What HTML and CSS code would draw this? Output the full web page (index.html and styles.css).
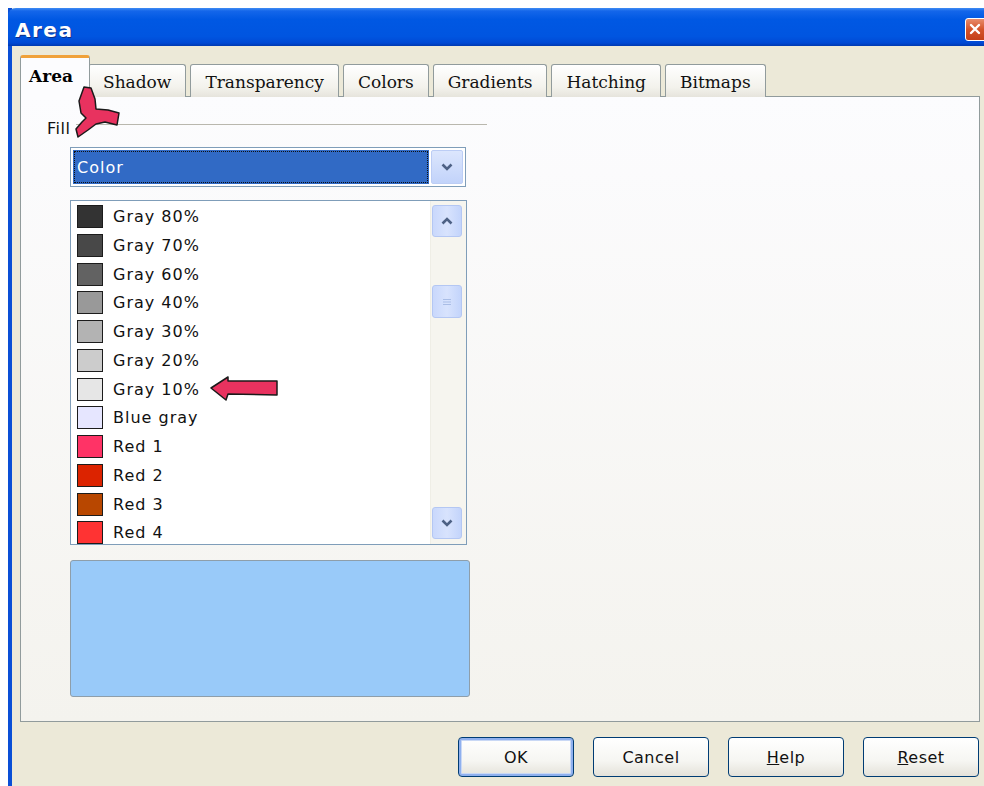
FILE: index.html
```html
<!DOCTYPE html>
<html lang="en">
<head>
<meta charset="utf-8">
<title>Area</title>
<link rel="stylesheet" href="styles.css">
</head>
<body>
<div class="window">
  <header class="titlebar">
    <span class="title">Area</span>
    <span class="close-btn">
      <svg width="12" height="12" viewBox="0 0 12 12"><path d="M2 2 L10 10 M10 2 L2 10" stroke="#fff" stroke-width="2.4" stroke-linecap="round"/></svg>
    </span>
  </header>

  <div class="client">
    <nav class="tabs">
      <span class="tab active">Area</span>
      <span class="tab">Shadow</span>
      <span class="tab">Transparency</span>
      <span class="tab">Colors</span>
      <span class="tab">Gradients</span>
      <span class="tab">Hatching</span>
      <span class="tab">Bitmaps</span>
    </nav>

    <section class="panel">
      <div class="fill-row">
        <span class="fill-label">Fill</span>
        <span class="rule"></span>
      </div>

      <div class="fill-body">
        <div class="select">
          <span class="select-value"><span class="focus">Color</span></span>
          <span class="select-btn">
            <svg width="14" height="10" viewBox="0 0 14 10"><path d="M2.5 2.5 L7 7 L11.5 2.5" fill="none" stroke="#4d6185" stroke-width="2.6"/></svg>
          </span>
        </div>

        <div class="listbox">
          <ul class="items">
            <li class="item"><span class="swatch" style="background:#333333"></span>Gray 80%</li>
            <li class="item"><span class="swatch" style="background:#484848"></span>Gray 70%</li>
            <li class="item"><span class="swatch" style="background:#626262"></span>Gray 60%</li>
            <li class="item"><span class="swatch" style="background:#999999"></span>Gray 40%</li>
            <li class="item"><span class="swatch" style="background:#b3b3b3"></span>Gray 30%</li>
            <li class="item"><span class="swatch" style="background:#cccccc"></span>Gray 20%</li>
            <li class="item"><span class="swatch" style="background:#e6e6e6"></span>Gray 10%</li>
            <li class="item"><span class="swatch" style="background:#e6e6ff"></span>Blue gray</li>
            <li class="item"><span class="swatch" style="background:#ff3366"></span>Red 1</li>
            <li class="item"><span class="swatch" style="background:#dc2300"></span>Red 2</li>
            <li class="item"><span class="swatch" style="background:#b84700"></span>Red 3</li>
            <li class="item"><span class="swatch" style="background:#ff3333"></span>Red 4</li>
          </ul>
          <div class="scrollbar">
            <span class="sb-btn">
              <svg width="14" height="10" viewBox="0 0 14 10"><path d="M2.5 7.5 L7 3 L11.5 7.5" fill="none" stroke="#4d6185" stroke-width="2.6"/></svg>
            </span>
            <span class="sb-track">
              <span class="sb-thumb">
                <svg width="10" height="10" viewBox="0 0 10 10"><path d="M1 2.5 H9 M1 5 H9 M1 7.5 H9" stroke="#a9bde6" stroke-width="1"/></svg>
              </span>
            </span>
            <span class="sb-btn">
              <svg width="14" height="10" viewBox="0 0 14 10"><path d="M2.5 2.5 L7 7 L11.5 2.5" fill="none" stroke="#4d6185" stroke-width="2.6"/></svg>
            </span>
          </div>
        </div>

        <div class="preview"></div>
      </div>
    </section>

    <footer class="buttons">
      <button class="btn default">OK</button>
      <button class="btn">Cancel</button>
      <button class="btn"><u>H</u>elp</button>
      <button class="btn"><u>R</u>eset</button>
    </footer>
  </div>

  <!-- pointer callouts drawn over the dialog -->
  <svg class="callout callout-tab" width="60" height="60" viewBox="0 0 60 60">
    <path d="M9 2 L16 3 L20 14 L21 24 L33 25 L44 28 L42 40 L30 37 L21 39 L13 45 L3 52 L1 44 L7 37 L11 33 L6 28 L4 16 Z" fill="#e8325f" stroke="#1a1a1a" stroke-width="1.5" stroke-linejoin="round"/>
  </svg>
  <svg class="callout callout-item" width="72" height="30" viewBox="0 0 72 30">
    <path d="M2 14 L19 3 L19 7 L68 7 L68 21 L19 20 L17 26 Z" fill="#e8325f" stroke="#1a1a1a" stroke-width="1.5" stroke-linejoin="round"/>
  </svg>
</div>
</body>
</html>
```

FILE: styles.css
```css
html, body {
  height: 100%;
}

body {
  margin: 8px 0 0 8px;
  background: #ffffff;
  overflow: hidden;
  font-family: "DejaVu Sans", "Liberation Sans", sans-serif;
}

.window {
  position: relative;
  height: 100%;
  border-left: 4px solid #0a4fd6;
  background: #ece9d8;
  display: flex;
  flex-direction: column;
}

/* Title bar */
.titlebar {
  height: 38px;
  margin-left: -4px;
  border-top-left-radius: 8px;
  background: linear-gradient(to bottom, #3f8cf3 0%, #1466ea 8%, #0058e3 30%, #0055e0 75%, #0049d4 92%, #0039b0 100%);
  display: flex;
  align-items: center;
  justify-content: space-between;
  flex-shrink: 0;
}

.title {
  margin-left: 7px;
  margin-top: 6px;
  color: #ffffff;
  font-weight: bold;
  font-size: 20px;
  letter-spacing: 1.5px;
  text-shadow: 1px 1px 0 #0b2f8c;
}

.close-btn {
  width: 24px;
  height: 23px;
  margin-top: 4px;
  margin-right: -5px;
  border: 1px solid #ffffff;
  border-radius: 3px;
  background: linear-gradient(to bottom, #e88c6c, #d4532a 50%, #c4401a);
  display: flex;
  align-items: center;
  justify-content: center;
  padding-right: 4px;
  box-sizing: border-box;
}

/* Client area */
.client {
  flex: 1;
  padding: 9px 4px 0 8px;
  display: flex;
  flex-direction: column;
}

.tabs {
  display: flex;
  align-items: flex-end;
  height: 42px;
  position: relative;
  z-index: 1;
  margin-bottom: -1px;
}

.tab {
  height: 33px;
  padding: 1px 14px 0;
  margin-right: 4px;
  box-sizing: border-box;
  border: 1px solid #919b9c;
  border-bottom: none;
  border-radius: 3px 3px 0 0;
  background: linear-gradient(to bottom, #ffffff, #f3f2ec 70%, #e6e4dc);
  font-family: "DejaVu Serif", "Liberation Serif", serif;
  font-size: 17px;
  color: #111;
  display: flex;
  align-items: center;
}

.tab.active {
  height: 42px;
  padding: 0 16px 4px 8px;
  margin-right: -2px;
  position: relative;
  z-index: 1;
  background: #fcfcfe;
  border-top: 3px solid #f0a13a;
  font-weight: bold;
  color: #000;
}

.panel {
  height: 626px;
  box-sizing: border-box;
  border: 1px solid #919b9c;
  background: linear-gradient(to bottom, #fcfcfe, #f4f3ee);
  padding: 19px 0 0 26px;
  flex-shrink: 0;
}

.fill-row {
  width: 440px;
  height: 24px;
  display: flex;
  align-items: center;
  gap: 6px;
}

.fill-label {
  font-size: 16px;
  color: #111;
  letter-spacing: 0.5px;
}

.rule {
  flex: 1;
  height: 0;
  border-top: 1px solid #b9b7ae;
  margin-bottom: 8px;
}

.fill-body {
  margin-left: 23px;
  width: 400px;
}

/* Dropdown */
.select {
  margin-top: 7px;
  width: 396px;
  height: 40px;
  box-sizing: border-box;
  border: 1px solid #7f9db9;
  background: #ffffff;
  padding: 2px;
  display: flex;
  gap: 2px;
}

.select-value {
  flex: 1;
  background: #316ac5;
  padding: 1px;
  display: flex;
}

.focus {
  flex: 1;
  border: 1px dotted #e8e0a0;
  outline: 1px dotted #111;
  outline-offset: -1px;
  color: #ffffff;
  font-size: 16px;
  letter-spacing: 1px;
  line-height: 32px;
  padding-left: 2px;
}

.select-btn {
  width: 32px;
  border-radius: 2px;
  background: linear-gradient(to bottom, #dce6fd, #c2d3fa);
  border: 1px solid #bccdf5;
  box-sizing: border-box;
  display: flex;
  align-items: center;
  justify-content: center;
}

/* List box */
.listbox {
  margin-top: 13px;
  width: 397px;
  height: 345px;
  box-sizing: border-box;
  border: 1px solid #7f9db9;
  background: #ffffff;
  display: flex;
  overflow: hidden;
}

.items {
  flex: 1;
  list-style: none;
  margin: 0;
  padding: 4px 0 0 6px;
  overflow: hidden;
}

.item {
  height: 28.75px;
  display: flex;
  align-items: flex-start;
  font-size: 16px;
  letter-spacing: 1px;
  color: #111;
  line-height: 23px;
}

.swatch {
  width: 26px;
  height: 23px;
  box-sizing: border-box;
  border: 1px solid #1c1c1c;
  margin-right: 10px;
  flex-shrink: 0;
}

.scrollbar {
  width: 36px;
  background: #f6f5ef;
  border-left: 1px solid #efeee6;
  padding: 4px 4px 5px 1px;
  box-sizing: border-box;
  display: flex;
  flex-direction: column;
}

.sb-btn,
.sb-thumb {
  height: 32px;
  border: 1px solid #b4c7f3;
  border-radius: 3px;
  background: linear-gradient(to right, #c9d8fc, #d8e3fd 50%, #c3d4fb);
  box-sizing: border-box;
  display: flex;
  align-items: center;
  justify-content: center;
}

.sb-track {
  flex: 1;
  padding-top: 48px;
}

.sb-thumb {
  height: 33px;
}

.preview {
  margin-top: 15px;
  width: 400px;
  height: 137px;
  box-sizing: border-box;
  border: 1px solid #8e9eaa;
  border-radius: 3px;
  background: #99caf9;
}

/* Command buttons */
.buttons {
  margin-top: 15px;
  display: flex;
  justify-content: flex-end;
  gap: 19px;
  padding-right: 1px;
}

.btn {
  width: 116px;
  height: 40px;
  border: 1px solid #003c74;
  border-radius: 4px;
  background: linear-gradient(to bottom, #ffffff, #f6f6f2 60%, #e4e2da);
  font-family: "DejaVu Sans", sans-serif;
  font-size: 16px;
  letter-spacing: 0.5px;
  color: #111;
  padding: 0;
}

.btn.default {
  box-shadow: inset 0 0 0 2px #8fb0ee, inset 0 0 0 3px #c9d8f5;
}

/* Pointer callouts */
.callout {
  position: absolute;
  z-index: 5;
  pointer-events: none;
}

.callout-tab {
  left: 63px;
  top: 77px;
}

.callout-item {
  left: 197px;
  top: 366px;
}
```
